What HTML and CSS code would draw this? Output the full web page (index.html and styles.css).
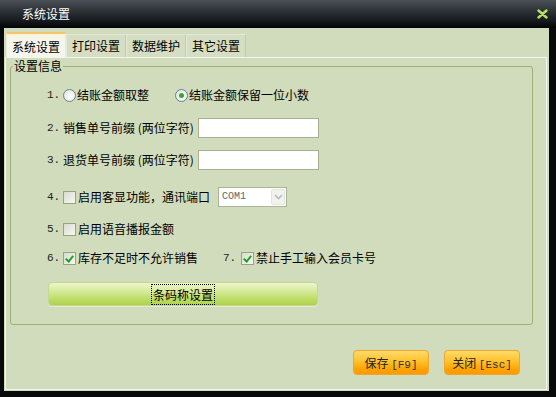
FILE: index.html
```html
<!DOCTYPE html>
<html>
<head>
    <meta charset="utf-8">
    <title>系统设置</title>
    <link rel="stylesheet" href="styles.css">
</head>
<body>
    <div class="window">
        <div class="titlebar">
            <span class="title">系统设置</span>
            <svg class="close" width="11" height="10" viewBox="0 0 11 10">
                <path d="M1.5 1.5 L9.5 8.5 M9.5 1.5 L1.5 8.5" stroke="#b9e060" stroke-width="2.4" stroke-linecap="round"/>
            </svg>
        </div>
        <div class="client">
            <div class="tabs">
                <div class="tab active">系统设置</div>
                <div class="tab">打印设置</div>
                <div class="tab">数据维护</div>
                <div class="tab">其它设置</div>
            </div>
            <div class="page">
                <fieldset class="group">
                    <legend>设置信息</legend>
                    <div class="rows">
                        <div class="row">
                            <span class="num">1.</span>
                            <label class="opt"><span class="radio"></span>结账金额取整</label>
                            <label class="opt second"><span class="radio on"></span>结账金额保留一位小数</label>
                        </div>
                        <div class="row r2">
                            <span class="num">2.</span>
                            <span class="label">销售单号前缀 (两位字符)</span>
                            <span class="input"></span>
                        </div>
                        <div class="row">
                            <span class="num">3.</span>
                            <span class="label">退货单号前缀 (两位字符)</span>
                            <span class="input"></span>
                        </div>
                        <div class="row r4">
                            <span class="num">4.</span>
                            <label class="opt"><span class="check"></span>启用客显功能，通讯端口</label>
                            <span class="select">
                                <span class="select-value">COM1</span>
                                <span class="select-btn">
                                    <svg width="9" height="6" viewBox="0 0 9 6"><path d="M1 1 L4.5 4.5 L8 1" fill="none" stroke="#b4bcc4" stroke-width="1.6"/></svg>
                                </span>
                            </span>
                        </div>
                        <div class="row">
                            <span class="num">5.</span>
                            <label class="opt"><span class="check"></span>启用语音播报金额</label>
                        </div>
                        <div class="row r6">
                            <span class="num">6.</span>
                            <label class="opt"><span class="check on"></span>库存不足时不允许销售</label>
                            <span class="num second">7.</span>
                            <label class="opt"><span class="check on"></span>禁止手工输入会员卡号</label>
                        </div>
                        <button class="btn-green"><span class="focus">条码称设置</span></button>
                    </div>
                </fieldset>
                <div class="actions">
                    <button class="btn-orange">保存 <span class="key">[F9]</span></button>
                    <button class="btn-orange">关闭 <span class="key">[Esc]</span></button>
                </div>
            </div>
        </div>
    </div>
</body>
</html>
```

FILE: styles.css
```css
body { margin: 0; font-family: "Noto Sans CJK SC", sans-serif; font-size: 12px; color: #000; background: #000; }

/* Окно */
.window { width: 556px; height: 397px; display: flex; flex-direction: column; background: #07090b; }
.titlebar { height: 28px; flex: none; display: flex; align-items: center; justify-content: space-between;
            padding: 0 8px 0 22px; box-sizing: border-box;
            background: linear-gradient(#4c5157, #30353a 35%, #15191d 75%, #020304); }
.title { color: #fff; font-size: 12px; line-height: 14px; }
.close { margin-top: -1px; }

.client { width: 545px; height: 363px; margin-left: 4px; box-sizing: border-box; padding: 0 2px 1px 1px;
          background: #d1dcbc; display: flex; flex-direction: column; }

/* Вкладки */
.tabs { height: 29px; flex: none; display: flex; align-items: flex-end; padding-left: 1px; }
.tab { width: 60px; height: 23px; box-sizing: border-box; text-align: center; line-height: 22px;
       background: #d5dec2; border: 1px solid #e3e9d6; border-bottom: none; border-right-color: #c3cca9; }
.tab.active { height: 26px; line-height: 25px; margin-bottom: -1px; position: relative; z-index: 1;
              background: linear-gradient(#fbf3dc, #f5f6ee 30%); border: 1px solid #efe8d4; border-top: 2px solid #f2c56c; border-bottom: none; }

.page { flex: 1; border: 1px solid #f3f6ec; display: flex; flex-direction: column; }

/* Группа */
.group { margin: 1px 13px 0 4px; padding: 0 0 18px 2px; border: 1px solid #9fae76; border-radius: 3px; }
.group legend { padding: 0 1px; line-height: 14px; }
.rows { display: flex; flex-direction: column; gap: 12px; padding: 12px 0 0 34px; }
.row { height: 20px; display: flex; align-items: center; line-height: 14px; }
.row.r2 { margin-top: 1px; }
.row.r4 { margin-top: 5px; }
.row.r6 { margin-top: -3px; }

.num { width: 16px; color: #222; font-family: "Liberation Mono", monospace; font-size: 11px; }
.num.second { width: 18px; margin-left: 25px; }
.opt { display: flex; align-items: center; }
.opt.second { margin-left: 26px; }
.label { margin-right: 4px; white-space: pre; }

.radio { width: 13px; height: 13px; box-sizing: border-box; border-radius: 50%; margin-right: 1px;
         border: 1px solid #6a7f96; background: radial-gradient(circle at 60% 60%, #fff, #dcdfd6);
         display: flex; align-items: center; justify-content: center; }
.radio.on::after { content: ""; width: 5px; height: 5px; border-radius: 50%; background: #3aa536; }

.check { width: 13px; height: 13px; box-sizing: border-box; margin-right: 2px; position: relative;
         border: 1px solid #95a47a; background: linear-gradient(135deg, #d9dbcf, #f8f8f4); }
.check.on::after { content: ""; position: absolute; left: 3px; top: 1px; width: 3px; height: 6px;
                   border: solid #22a024; border-width: 0 2px 2px 0; transform: rotate(40deg); }

.input { width: 121px; height: 20px; box-sizing: border-box; background: #fff; border: 1px solid #a5b18f; }

.select { width: 69px; height: 20px; margin-left: 8px; box-sizing: border-box; background: #fff;
          border: 1px solid #a9b596; display: flex; align-items: center; justify-content: space-between; padding: 0 1px 0 3px; }
.select-value { font-family: "Liberation Mono", monospace; font-size: 10px; color: #666; }
.select-btn { width: 14px; height: 16px; box-sizing: border-box; background: #f1f2ee; border: 1px solid #e2e5dc; border-radius: 2px;
              display: flex; align-items: center; justify-content: center; }

/* Кнопки */
.btn-green { width: 270px; height: 24px; margin: 2px 0 0 1px; padding: 0; font: inherit; color: #000; cursor: pointer;
             border: 1px solid #c4d894; border-radius: 4px;
             background: linear-gradient(#eef6cc, #d4e995 40%, #bcdc66 75%, #aed24c);
             box-shadow: 0 1px 0 #e2ead0; }
.btn-green .focus { outline: 1px dotted #000; outline-offset: 1px; font-size: 12px; line-height: 14px; }

.actions { display: flex; justify-content: flex-end; gap: 15px; margin-top: 25px; padding-right: 26px; }
.btn-orange { width: 76px; height: 25px; padding: 0; font: inherit; color: #222; cursor: pointer;
              border: 1px solid #eda82c; border-radius: 4px;
              background: linear-gradient(#ffdb6a, #ffc22c 45%, #ffa200 80%, #ff9a00); }
.btn-orange .key { font-family: "Liberation Mono", monospace; font-size: 11px; color: #333; }
```
